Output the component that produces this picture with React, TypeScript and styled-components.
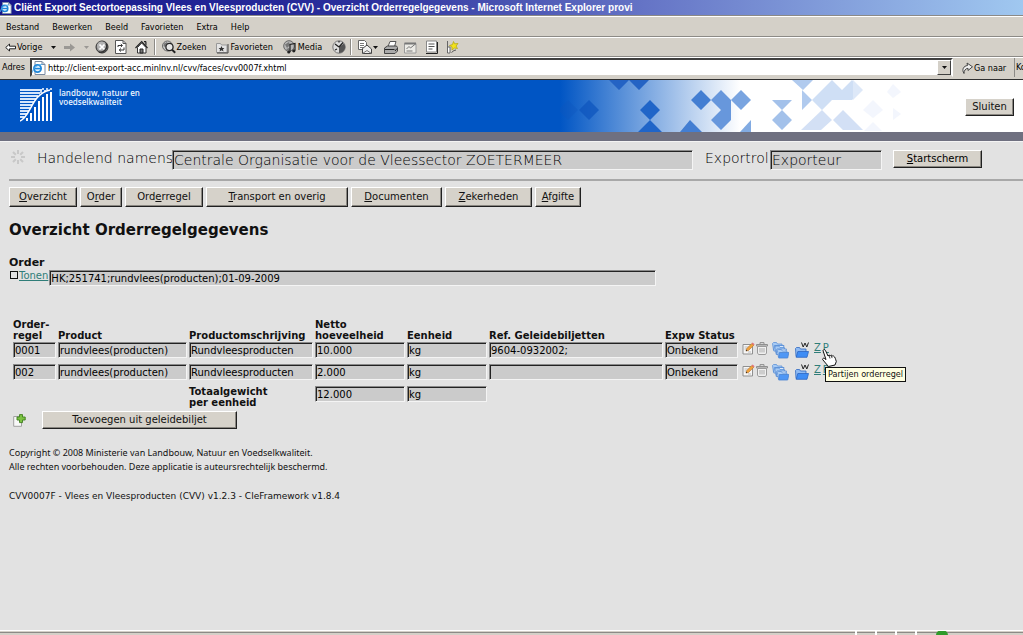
import React from "react";
import styled, { createGlobalStyle } from "styled-components";

const VERDANA = `Verdana, "DejaVu Sans", sans-serif`;
const LARGE = `"DejaVu Sans Light", "DejaVu Sans", sans-serif`;
const TAHOMA = `"DejaVu Sans Condensed", "DejaVu Sans", sans-serif`;

const GlobalStyle = createGlobalStyle`
  * { box-sizing: border-box; }
  html, body { margin: 0; padding: 0; }
  body { background: #e2e2e2; color: #111; font-family: ${VERDANA}; font-size: 10px; overflow: hidden; }
  button, input { font-family: inherit; color: inherit; border-radius: 0; margin: 0; }
  svg { display: block; flex: none; }
`;

const Window = styled.div`
  min-height: 100vh;
  display: flex;
  flex-direction: column;
`;

const Pad = styled.span<{ $width: number }>`
  width: ${(p) => p.$width}px;
  flex: none;
`;

/* ---------- browser chrome ---------- */

const TitleBar = styled.div`
  height: 16px;
  display: flex;
  align-items: center;
  gap: 2px;
  background: linear-gradient(90deg, #16168c 0%, #2a2f9c 35%, #6574c6 63%, #a0c8f0 100%);
  border-bottom: 1px solid #8c8a86;
  color: #fff;
  font: bold 10px/15px "Liberation Sans", sans-serif;
  white-space: nowrap;
`;

const ChromeRow = styled.div<{ $height: number }>`
  height: ${(p) => p.$height}px;
  display: flex;
  align-items: center;
  background: #d4d0c8;
  border-top: 1px solid #fff;
  border-bottom: 1px solid #8c8a86;
  color: #000;
  font: 9px/14px ${TAHOMA};
  white-space: nowrap;
  overflow: hidden;
`;

const MenuItem = styled.button`
  border: 0;
  background: none;
  padding: 0 6px;
  font: inherit;
`;

const MenuRow = styled(ChromeRow)`
  gap: 1px;
`;

const ToolButton = styled.button<{ $gap?: number }>`
  border: 0;
  background: none;
  padding: 0;
  margin-right: ${(p) => p.$gap ?? 6}px;
  font: inherit;
  display: flex;
  align-items: center;
  gap: 1px;
`;

const ToolSeparator = styled.span`
  width: 2px;
  height: 16px;
  margin-right: 6px;
  border-left: 1px solid #8c8a86;
  border-right: 1px solid #fff;
`;

const AddressRow = styled(ChromeRow)`
  padding-left: 2px;
  border-bottom: 1px solid #303030;
  align-items: flex-start;
`;

const AddressLabel = styled.label`
  padding-top: 2px;
  width: 28px;
`;

const AddressBox = styled.div`
  flex: 1;
  display: flex;
  align-items: center;
  height: 19px;
  background: #fff;
  border: 2px solid;
  border-color: #404040 #fff #d4d0c8 #404040;
`;

const AddressInput = styled.input`
  flex: 1;
  min-width: 0;
  border: 0;
  padding: 0 0 0 2px;
  background: none;
  font: 9px/14px ${TAHOMA};
`;

const DropButton = styled.button`
  width: 14px;
  height: 15px;
  padding: 0;
  display: flex;
  align-items: center;
  justify-content: center;
  background: #d4d0c8;
  border: 1px solid;
  border-color: #fff #404040 #404040 #fff;
`;

const GoButton = styled(ToolButton)`
  width: 62px;
  height: 19px;
  margin: 0;
  padding-left: 9px;
  border-right: 1px solid #8c8a86;
`;

const LinksLabel = styled.span`
  width: 8px;
  padding: 2px 0 0 1px;
  overflow: hidden;
`;

/* ---------- application ---------- */

const Banner = styled.header`
  height: 52px;
  display: flex;
  background: linear-gradient(90deg, #0055c4 560px, #fff 740px);
`;

const Brand = styled.div`
  width: 560px;
  padding: 8px 0 0 20px;
  display: flex;
  gap: 7px;
  color: #eaf3ff;
  font: 600 8px/9px "Open Sans", sans-serif;
`;

const BannerActions = styled.div`
  flex: 1;
  display: flex;
  justify-content: flex-end;
  align-items: flex-start;
  padding: 18px 9px 0 0;
`;

const BannerRule = styled.div`
  height: 10px;
  background: #6f7080;
  border-bottom: 1px solid #f4f4f4;
`;

const Button = styled.button<{ $width: number; $height?: number }>`
  width: ${(p) => p.$width}px;
  height: ${(p) => p.$height ?? 18}px;
  flex: none;
  padding: 0;
  background: #d6d2ca;
  border: 1px solid;
  border-color: #fff #202020 #202020 #fff;
  box-shadow: inset -1px -1px #8a8781;
  font-size: 10px;
  line-height: 12px;
  white-space: nowrap;
`;

const Field = styled.input<{ $large?: boolean }>`
  display: block;
  width: 100%;
  height: ${(p) => (p.$large ? 20 : 16)}px;
  padding: ${(p) => (p.$large ? "0 1px" : "1px 1px 0")};
  background: #cbcbcb;
  border: 1px solid;
  border-color: #8a8a8a #f4f4f4 #f4f4f4 #8a8a8a;
  box-shadow: inset 1px 1px #222;
  color: #000;
  font-family: ${(p) => (p.$large ? LARGE : VERDANA)};
  font-size: ${(p) => (p.$large ? 14 : 10)}px;
`;

const Main = styled.main`
  flex: 1;
  padding: 0 0 0 9px;
`;

const ActorBar = styled.div`
  height: 39px;
  display: flex;
  align-items: flex-start;
  padding: 8px 0 0 2px;
  border-bottom: 2px solid #a8a8a8;
  color: #000;
  font-family: ${LARGE};
  font-size: 14px;
  line-height: 16px;
`;

const ActorLabel = styled.label<{ $width: number }>`
  width: ${(p) => p.$width}px;
  white-space: nowrap;
`;

const FieldSlot = styled.div<{ $width: number }>`
  width: ${(p) => p.$width}px;
  flex: none;
`;

const Spinner = styled.div`
  width: 26px;
`;

const StartSlot = styled.div`
  display: flex;
  padding-left: 11px;
`;

const StartButton = styled(Button)`
  font-family: ${VERDANA};
`;

const Tabs = styled.nav`
  display: flex;
  gap: 3px;
  padding-top: 6px;
`;

const PageTitle = styled.h1`
  margin: 13px 0 0;
  font-size: 15px;
  line-height: 20px;
`;

const SectionTitle = styled.h2`
  margin: 17px 0 0;
  font-size: 11px;
  line-height: 12px;
`;

const OrderRow = styled.div`
  display: flex;
  align-items: flex-start;
  gap: 1px;
  padding-top: 1px;
  margin-bottom: 32px;
`;

const Toggle = styled.span`
  width: 8px;
  height: 8px;
  margin: 1px 0 0 1px;
  border: 1px solid #111;
`;

const TextLink = styled.a`
  color: #2f7d78;
  font-size: 10px;
  line-height: 11px;
`;

const LineTable = styled.table`
  margin-left: 4px;
  table-layout: fixed;
  width: 860px;
  border-collapse: collapse;
`;

const Head = styled.th`
  padding: 0 0 1px;
  height: 24px;
  text-align: left;
  vertical-align: bottom;
  font-size: 10px;
  line-height: 11px;
  white-space: nowrap;
`;

const Cell = styled.td`
  padding: 0 2px 6px 0;
  vertical-align: top;
`;

const TotalLabel = styled.th`
  padding: 0;
  text-align: left;
  vertical-align: top;
  font-size: 10px;
  line-height: 11px;
`;

const RowActions = styled.div`
  position: relative;
  display: flex;
  align-items: flex-start;
  height: 16px;
  padding-left: 2px;
`;

const IconButton = styled.button<{ $width: number }>`
  width: ${(p) => p.$width}px;
  flex: none;
  padding: 0;
  border: 0;
  background: none;
`;

const ActionLink = styled(TextLink)`
  margin-right: 2px;
`;

const Tooltip = styled.div`
  position: absolute;
  left: 85px;
  top: 25px;
  height: 15px;
  padding: 0 2px;
  border: 1px solid #111;
  background: #ffffe1;
  font: 9px/13px ${TAHOMA};
  white-space: nowrap;
  z-index: 1;
`;

const Pointer = styled.div`
  position: absolute;
  left: 82px;
  top: 7px;
  z-index: 2;
`;

const AddRow = styled.div`
  display: flex;
  gap: 16px;
  padding: 3px 0 0 4px;
`;

const Footer = styled.footer`
  padding-top: 17px;
  font-size: 9px;
  line-height: 14px;

  p { margin: 0 0 15px; }
`;

const Copyright = styled.p`
  font-family: "Noto Sans", sans-serif;
`;

const StatusBar = styled.div`
  height: 5px;
  display: flex;
  justify-content: flex-end;
  padding-right: 74px;
  background: #d4d0c8;
  border-top: 1px solid #fff;
  box-shadow: inset 0 1px 0 #d4d0c8, inset 0 2px 0 #8c8a86;
`;

const StatusPane = styled.span`
  width: 20px;
  height: 4px;
  border-left: 2px solid #fff;
`;

/* ---------- drawings ---------- */

const IePage = ({ size }: { size: number }) => (
  <svg width={size} height={size} viewBox="0 0 14 14">
    <path d="M3 .5h7l3 3v10H3z" fill="#fff" stroke="#7a8aa0" />
    <path d="M10 .5v3h3" fill="none" stroke="#7a8aa0" />
    <circle cx="5.5" cy="7.5" r="3.6" fill="#dff1ff" stroke="#1f86d8" strokeWidth="1.8" />
    <path d="M2.5 7.6h6.4" stroke="#1f86d8" strokeWidth="1.5" />
    <path d="M.6 11.5C0 8 5 3.500 10.500 3.300" fill="none" stroke="#4fa8e8" />
  </svg>
);

const Caret = ({ color = "#111" }: { color?: string }) => (
  <svg width="5" height="3" viewBox="0 0 5 3"><path d="M0 0h5L2.500 3z" fill={color} /></svg>
);

const BackIcon = () => (
  <svg width="11" height="9" viewBox="0 0 11 9">
    <path d="M.7 4.500 4.500 1v2.200h6v2.600h-6V8z" fill="#fff" stroke="#222" />
  </svg>
);

const ForwardIcon = () => (
  <svg width="12" height="9" viewBox="0 0 12 9">
    <path d="M0 3h6V.5l5 4-5 4V6H0z" fill="#9a9894" />
  </svg>
);

const StopIcon = () => (
  <svg width="14" height="14" viewBox="0 0 14 14">
    <circle cx="7" cy="7" r="6" fill="#8d8d8d" stroke="#333" />
    <circle cx="6.500" cy="6" r="4.500" fill="#b4b4b4" />
    <path d="m4.500 4.500 5 5m0-5-5 5" stroke="#fff" strokeWidth="1.700" />
    <path d="M11 3.500a6 6 0 0 1-7 8.500" fill="none" stroke="#333" strokeWidth="1.500" />
  </svg>
);

const RefreshIcon = () => (
  <svg width="12" height="14" viewBox="0 0 12 14">
    <path d="M.5.500h7.500l3 3v10H.5z" fill="#fff" stroke="#555" />
    <path d="M8 .5v3h3" fill="none" stroke="#555" />
    <path d="M3 7V5.500h4M5.800 4l1.700 1.500L5.800 7M9 7.500V10H4.500M6 8.500 4.200 10 6 11.500" fill="none" stroke="#333" />
  </svg>
);

const HomeIcon = () => (
  <svg width="13" height="14" viewBox="0 0 13 14">
    <path d="M9 1.500h2v4" fill="#777" stroke="#222" />
    <path d="M2.500 7.500V13h8.500V7.500L6.700 3z" fill="#fff" stroke="#333" />
    <path d="M.5 8 6.700 1.700 12.500 8" fill="none" stroke="#222" strokeWidth="1.200" />
    <path d="M5 13V9h3v4z" fill="#777" stroke="#222" />
  </svg>
);

const SearchIcon = () => (
  <svg width="14" height="14" viewBox="0 0 14 14">
    <circle cx="5.500" cy="6" r="5" fill="#c9c9c9" stroke="#666" />
    <path d="M2 3.500 5 2l1 2-3 3-1.500-1z" fill="#777" />
    <circle cx="7.500" cy="7" r="3.600" fill="#e8e8e8" stroke="#222" strokeWidth="1.300" />
    <path d="m10 9.600 3.200 3.200" stroke="#222" strokeWidth="2" />
  </svg>
);

const FavoritesIcon = () => (
  <svg width="13" height="13" viewBox="0 0 13 13">
    <path d="M.5 2.500h4l1 1.500h5.500v7.500H.5z" fill="#e4e4e4" stroke="#999" />
    <path d="m5.500 5 .9 2h2L6.900 8.400l.7 2.100-2.100-1.200-2 1.200.6-2.100L2.600 7h2z" fill="#333" />
    <path d="M12 3v9H1" fill="none" stroke="#444" />
  </svg>
);

const MediaIcon = () => (
  <svg width="14" height="14" viewBox="0 0 14 14">
    <circle cx="6" cy="6" r="5.300" fill="#b8b8b8" stroke="#666" />
    <path d="M2 4.500 6 2l1 3-3 3zM3 9l3-1 1 2-2 1z" fill="#777" />
    <path d="M7 12V4.500L12 3.500v7" fill="none" stroke="#222" strokeWidth="1.200" />
    <circle cx="5.800" cy="12" r="1.600" fill="#222" />
    <circle cx="10.800" cy="10.800" r="1.600" fill="#222" />
  </svg>
);

const HistoryIcon = () => (
  <svg width="14" height="14" viewBox="0 0 14 14">
    <circle cx="7" cy="7" r="6.200" fill="#ddd" stroke="#777" />
    <path d="M7 7 12 3.500A6 6 0 0 1 7 13z" fill="#555" />
    <path d="M7 7 3 4m4 3 4-4.500M3 10l2-1M7 1v1.500" stroke="#222" strokeWidth="1.200" />
  </svg>
);

const MailIcon = () => (
  <svg width="14" height="14" viewBox="0 0 14 14">
    <path d="M.5.500h6l2 2v7h-8z" fill="#fff" stroke="#666" />
    <path d="M2 3.500h4M2 5.500h4M2 7.500h3" stroke="#777" />
    <path d="M4.500 8.500 9 5l4.500 4v4.500h-9z" fill="#eee" stroke="#444" />
    <path d="m4.500 13.500 4.500-3 4.500 3" fill="none" stroke="#777" />
  </svg>
);

const PrintIcon = () => (
  <svg width="14" height="13" viewBox="0 0 14 13">
    <path d="M4 5.500 6 .5h6l-1.500 5z" fill="#fff" stroke="#555" />
    <path d="m.5 7 3-2h9l1 1.500V10l-2.500 2.500H.5z" fill="#aaa" stroke="#444" />
    <path d="M1 8.500h9.500M11 10l2-2.500" stroke="#222" />
  </svg>
);

const EditIcon = () => (
  <svg width="13" height="13" viewBox="0 0 13 13">
    <path d="M.5 2.500h11.500v9.500H.5z" fill="#ecebe6" stroke="#999" />
    <path d="M.5 2.500h11.500" stroke="#777" strokeWidth="2" />
    <path d="M2.500 8 5 5.500l1.500 1.500L12 2.500M2.500 10h6" fill="none" stroke="#777" />
  </svg>
);

const NotesIcon = () => (
  <svg width="13" height="14" viewBox="0 0 13 14">
    <path d="M1.500 1h10v11h-10z" fill="#fff" stroke="#888" />
    <path d="M3.500 4h6M3.500 6.500h6M3.500 9h4" stroke="#555" />
    <path d="M12.500 2v11.500H1" fill="none" stroke="#222" />
  </svg>
);

const MessengerIcon = () => (
  <svg width="13" height="14" viewBox="0 0 13 14">
    <path d="M1.500 1v12M1.500 7H4v6H1.500" fill="#fff" stroke="#666" />
    <path d="m7.500 1.500 1.200 2.300 3.300-.3-2 2.500 1.500 2.500-3-.5L6 10V7L3.500 5.500l3-1z" fill="#f3e21c" stroke="#b5aa18" strokeWidth=".8" />
    <path d="M5.500 12.500 8 10.500l2-.5" fill="none" stroke="#555" />
  </svg>
);

const GoIcon = () => (
  <svg width="11" height="12" viewBox="0 0 11 12">
    <path d="M2 11.500C-.5 7.500 1.500 4 5.500 3.500L5 1l5.500 3.800L6 8.500V6.300C3.500 6.500 2 8.500 2 11.500z" fill="#eee" stroke="#444" />
  </svg>
);

const MinistryLogo = () => (
  <svg width="32" height="34" viewBox="0 0 32 34">
    <g stroke="#d6e6fb" strokeWidth="2">
      <path d="M0 2h22M0 5h20M0 8h18M0 11h16M0 14h14M0 17h12M0 20h10.500M0 23h9M0 26h7M0 29h4.500" />
    </g>
    <path d="M0 33C11 29 11 6 30 2V33z" fill="#0055c4" />
    <path d="M0 33C11 29 11 6 30 2" fill="none" stroke="#fff" strokeWidth="1.500" />
    <g stroke="#fff" strokeWidth="2">
      <path d="M31 4v29M27 6v27M23 9v24M19 13v20M15 19v14M11 25v8M7 30v3" />
    </g>
    <path d="M22 1h2m2 0h2m2 0h2M20 4h2m2-1h2" stroke="#fff" strokeWidth="1.500" />
  </svg>
);

const BannerArt = () => (
  <svg width="360" height="52" viewBox="560 80 360 52">
    <g fill="#0f55bd">
      <path d="m568 100 10 10-10 10-10-10z" opacity=".35" />
      <path d="m589 100 10 10-10 10-10-10z" opacity=".75" />
      <path d="M609 80h20l-10 10zM629 80h20l-10 10z" fill="#2463c4" />
      <path d="m650 100 10 10-10 10-10-10zM650 120l12 12h-24z" fill="#2065c8" />
    </g>
    <path d="m701 90 10 10-10 10-10-10zM690 120l12 12h-22z" fill="#437ed2" />
    <path d="m721 90 10 10v20l-10 10-10-10 10-10-10-10z" fill="#6797dc" />
    <path d="m741 90 10 10-10 10-10-10z" fill="#79a4e0" />
    <path d="M751 120v12h-11z" fill="#82abe2" />
    <path d="M772 100h20l-10 10zM782 110l10 10-10 10-10-10z" fill="#a3c1ea" />
    <path d="M792 80h21l-10 10zM802 90l10 10-10 10z" fill="#b0caee" />
    <path d="m812 100 20-20 10 10 10-10 10 10-10 10h-20l-10 10z" fill="#cfdff5" />
    <path d="m822 110 10 10-11 10h-20zM833 120l10-10 20 20h-20z" fill="#d3e0f5" />
    <path d="m853 80 10 10-10 10z" fill="#dde8f8" />
    <path d="m873 100 10 10-10 8-10-8zM873 122l9 9h-18zM893 84l8 8-8 6-6-6zM893 108l8 6-8 6z" fill="#f3f6fd" />
  </svg>
);

const SpinnerIcon = () => (
  <svg width="14" height="14" viewBox="0 0 14 14">
    <g stroke="#c8c8c8" strokeWidth="2">
      <path d="M7 0v4M7 10v4M0 7h4M10 7h4M2 2l2.800 2.800M9.200 9.200 12 12M12 2 9.200 4.800M4.800 9.200 2 12" />
    </g>
  </svg>
);

const PencilIcon = () => (
  <svg width="13" height="13" viewBox="0 0 13 13">
    <path d="M1 2.500h9.500v9.500H1z" fill="#f6f6f6" stroke="#8f8f8f" />
    <path d="M2.500 5h5M2.500 7h3M6 10h3" stroke="#bbb" />
    <path d="m4 9 .8-2.500L9.800 1.500l2 1.800L6.500 8.500z" fill="#f0a23c" stroke="#b5702a" strokeWidth=".6" />
    <path d="m9.600 1.600 1-1.100 2 1.800-.9 1z" fill="#e2707c" />
    <path d="m3.800 9.200.5-1.400 1 .9z" fill="#222" />
  </svg>
);

const TrashIcon = () => (
  <svg width="12" height="13" viewBox="0 0 12 13">
    <path d="M4 2V.600h4V2M.5 2.500h11v1.500H.5z" fill="#ddd" stroke="#8f8f8f" />
    <path d="M1.500 4.500h9V11l-1 1.500h-7l-1-1.500z" fill="#f0f0f0" stroke="#9a9a9a" />
    <path d="M4 6v4.500M6 6v4.500M8 6v4.500" stroke="#aaa" />
  </svg>
);

const FoldersIcon = () => (
  <svg width="17" height="17" viewBox="0 0 17 17">
    {[0, 3.500, 7].map((d) => (
      <g key={d} transform={`translate(${d * 0.7} ${d})`}>
        <path d="M.5 1.500 1.500.500h3l1 1.500h4.500v6H1.500z" fill="#a8cbf4" stroke="#5d92d8" strokeWidth=".8" />
        <path d="M2.500 3.500H12L10.800 9h-9z" fill={d === 7 ? "#4f97f5" : "#dbe9fb"} stroke="#4a84d2" strokeWidth=".8" />
      </g>
    ))}
  </svg>
);

const WordFolderIcon = () => (
  <svg width="14" height="16" viewBox="0 0 14 16">
    <path d="M.5 6.500 1.500 5.500h3l1 1.500h5.500v7.500H1z" fill="#8fbaf2" stroke="#2f68c0" strokeWidth=".8" />
    <path d="M2.800 9.500h10.700L12 15.300H1.200z" fill="#3f8df5" stroke="#2c66c2" strokeWidth=".8" />
    <path d="m6.500 .5 1.700 4.500L10 1l1.800 4L13.500.5" fill="none" stroke="#222" />
  </svg>
);

const AddIcon = () => (
  <svg width="13" height="13" viewBox="0 0 13 13">
    <path d="M.7 2.500h7.800v9.800H.7z" fill="#f8f8f8" stroke="#a0a0a0" />
    <path d="M6.500.600h3v2.400h2.700v3H9.500v2.600h-3V6H4V3h2.500z" fill="#7cc242" stroke="#3f7f1e" strokeWidth=".9" />
  </svg>
);

const HandIcon = () => (
  <svg width="15" height="18" viewBox="0 0 15 18">
    <path d="M1 1.600C1.500.300 3 .400 3.500 1.500L6 7l1-.8 1.500.4.800-.4 1.400.8 1 .1c1.500 1 1.800 3 2.600 5.400L13 16l-6.500 1.500L3.500 14 .6 10.500c0-1.500 1.500-1.700 2.400-.7l1 .8z" fill="#fff" stroke="#111" />
    <path d="m7 6.500 1 3M9.200 6.500l.9 2.600" stroke="#111" strokeWidth=".8" />
  </svg>
);

/* ---------- data ---------- */

const menus = ["Bestand", "Bewerken", "Beeld", "Favorieten", "Extra", "Help"];

const tabs: { before: string; key: string; after: string; width: number }[] = [
  { before: "", key: "O", after: "verzicht", width: 68 },
  { before: "O", key: "r", after: "der", width: 42 },
  { before: "Ord", key: "e", after: "rregel", width: 78 },
  { before: "", key: "T", after: "ransport en overig", width: 142 },
  { before: "", key: "D", after: "ocumenten", width: 91 },
  { before: "", key: "Z", after: "ekerheden", width: 87 },
  { before: "", key: "A", after: "fgifte", width: 46 },
];

const columns = [
  { title: ["Order-", "regel"], width: 45 },
  { title: ["Product"], width: 131 },
  { title: ["Productomschrijving"], width: 126 },
  { title: ["Netto", "hoeveelheid"], width: 92 },
  { title: ["Eenheid"], width: 82 },
  { title: ["Ref. Geleidebiljetten"], width: 176 },
  { title: ["Expw Status"], width: 75 },
];

const rows = [
  ["0001", "rundvlees(producten)", "Rundvleesproducten", "10.000", "kg", "9604-0932002;", "Onbekend"],
  ["002", "rundvlees(producten)", "Rundvleesproducten", "2.000", "kg", "", "Onbekend"],
];

export default function App() {
  return (
    <Window>
      <GlobalStyle />
      <TitleBar>
        <IePage size={12} />
        Cliënt Export Sectortoepassing Vlees en Vleesproducten (CVV) - Overzicht Orderregelgegevens - Microsoft Internet Explorer provi
      </TitleBar>
      <MenuRow as="nav" $height={21}>
        {menus.map((m) => <MenuItem key={m}>{m}</MenuItem>)}
      </MenuRow>
      <ChromeRow $height={20}>
        <Pad $width={5} />
        <ToolButton $gap={8}><BackIcon />Vorige</ToolButton>
        <ToolButton $gap={8} aria-label="Vorige pagina's"><Caret /></ToolButton>
        <ToolButton $gap={8} aria-label="Volgende"><ForwardIcon /></ToolButton>
        <ToolButton aria-label="Volgende pagina's"><Caret color="#9a9894" /></ToolButton>
        <ToolButton aria-label="Stoppen"><StopIcon /></ToolButton>
        <ToolButton $gap={8} aria-label="Vernieuwen"><RefreshIcon /></ToolButton>
        <ToolButton aria-label="Startpagina"><HomeIcon /></ToolButton>
        <ToolSeparator />
        <ToolButton $gap={10}><SearchIcon />Zoeken</ToolButton>
        <ToolButton $gap={10}><FavoritesIcon />Favorieten</ToolButton>
        <ToolButton $gap={10}><MediaIcon />Media</ToolButton>
        <ToolButton $gap={4} aria-label="Geschiedenis"><HistoryIcon /></ToolButton>
        <ToolSeparator />
        <ToolButton aria-label="E-mail"><MailIcon /><Caret /></ToolButton>
        <ToolButton aria-label="Afdrukken"><PrintIcon /></ToolButton>
        <ToolButton $gap={8} aria-label="Bewerken"><EditIcon /></ToolButton>
        <ToolButton $gap={8} aria-label="Discussie"><NotesIcon /></ToolButton>
        <ToolButton aria-label="Messenger"><MessengerIcon /></ToolButton>
      </ChromeRow>
      <AddressRow $height={23}>
        <AddressLabel htmlFor="address">Adres</AddressLabel>
        <AddressBox>
          <IePage size={14} />
          <AddressInput id="address" defaultValue="http://client-export-acc.minlnv.nl/cvv/faces/cvv0007f.xhtml" />
          <DropButton aria-label="Adressen tonen"><Caret /></DropButton>
        </AddressBox>
        <GoButton><GoIcon />Ga naar</GoButton>
        <LinksLabel>Ko</LinksLabel>
      </AddressRow>

      <Banner>
        <Brand>
          <MinistryLogo />
          <span>landbouw, natuur en<br />voedselkwaliteit</span>
        </Brand>
        <BannerArt />
        <BannerActions><Button $width={49}>Sluiten</Button></BannerActions>
      </Banner>
      <BannerRule />

      <Main>
        <ActorBar>
          <Spinner><SpinnerIcon /></Spinner>
          <ActorLabel $width={135} htmlFor="actor">Handelend namens</ActorLabel>
          <FieldSlot $width={521}><Field id="actor" $large readOnly value="Centrale Organisatie voor de Vleessector ZOETERMEER" /></FieldSlot>
          <Pad $width={12} />
          <ActorLabel $width={65} htmlFor="role">Exportrol</ActorLabel>
          <FieldSlot $width={112}><Field id="role" $large readOnly value="Exporteur" /></FieldSlot>
          <StartSlot><StartButton $width={89}><u>S</u>tartscherm</StartButton></StartSlot>
        </ActorBar>

        <Tabs>
          {tabs.map((t) => (
            <Button key={t.after} $width={t.width} $height={20}>{t.before}<u>{t.key}</u>{t.after}</Button>
          ))}
        </Tabs>

        <PageTitle>Overzicht Orderregelgegevens</PageTitle>

        <SectionTitle>Order</SectionTitle>
        <OrderRow>
          <Toggle />
          <TextLink href="#tonen">Tonen</TextLink>
          <FieldSlot $width={607}><Field aria-label="Order" readOnly value="HK;251741;rundvlees(producten);01-09-2009" /></FieldSlot>
        </OrderRow>

        <LineTable>
          <colgroup>
            {columns.map((c) => <col key={c.title[0]} width={c.width} />)}
            <col />
          </colgroup>
          <thead>
            <tr>
              {columns.map((c) => (
                <Head key={c.title[0]}>
                  {c.title.map((line) => <div key={line}>{line}</div>)}
                </Head>
              ))}
              <Head />
            </tr>
          </thead>
          <tbody>
            {rows.map((row, r) => (
              <tr key={row[0]}>
                {row.map((value, i) => (
                  <Cell key={i}><Field aria-label={columns[i].title.join(" ")} readOnly value={value} /></Cell>
                ))}
                <Cell>
                  <RowActions>
                    <IconButton $width={14} aria-label="Wijzigen"><PencilIcon /></IconButton>
                    <IconButton $width={16} aria-label="Verwijderen"><TrashIcon /></IconButton>
                    <IconButton $width={23} aria-label="Kopiëren"><FoldersIcon /></IconButton>
                    <IconButton $width={19} aria-label="Word"><WordFolderIcon /></IconButton>
                    <ActionLink href="#z">Z</ActionLink>
                    <ActionLink href="#p">P</ActionLink>
                    {r === 0 && <Pointer><HandIcon /></Pointer>}
                    {r === 0 && <Tooltip role="tooltip">Partijen orderregel</Tooltip>}
                  </RowActions>
                </Cell>
              </tr>
            ))}
            <tr>
              <td colSpan={2} />
              <TotalLabel scope="row">Totaalgewicht<br />per eenheid</TotalLabel>
              <Cell><Field aria-label="Totaalgewicht" readOnly value="12.000" /></Cell>
              <Cell><Field aria-label="Eenheid totaal" readOnly value="kg" /></Cell>
              <td colSpan={3} />
            </tr>
          </tbody>
        </LineTable>

        <AddRow>
          <IconButton $width={13} aria-label="Toevoegen"><AddIcon /></IconButton>
          <Button $width={195}>Toevoegen uit geleidebiljet</Button>
        </AddRow>

        <Footer>
          <Copyright>
            Copyright © 2008 Ministerie van Landbouw, Natuur en Voedselkwaliteit.<br />
            Alle rechten voorbehouden. Deze applicatie is auteursrechtelijk beschermd.
          </Copyright>
          <p>CVV0007F - Vlees en Vleesproducten (CVV) v1.2.3 - CleFramework v1.8.4</p>
        </Footer>
      </Main>

      <StatusBar>
        <StatusPane /><StatusPane /><StatusPane /><StatusPane />
        <svg width="14" height="4" viewBox="0 0 14 4"><path d="M1 4a6 5 0 0 1 12 0z" fill="#2f9a2a" /></svg>
      </StatusBar>
    </Window>
  );
}
